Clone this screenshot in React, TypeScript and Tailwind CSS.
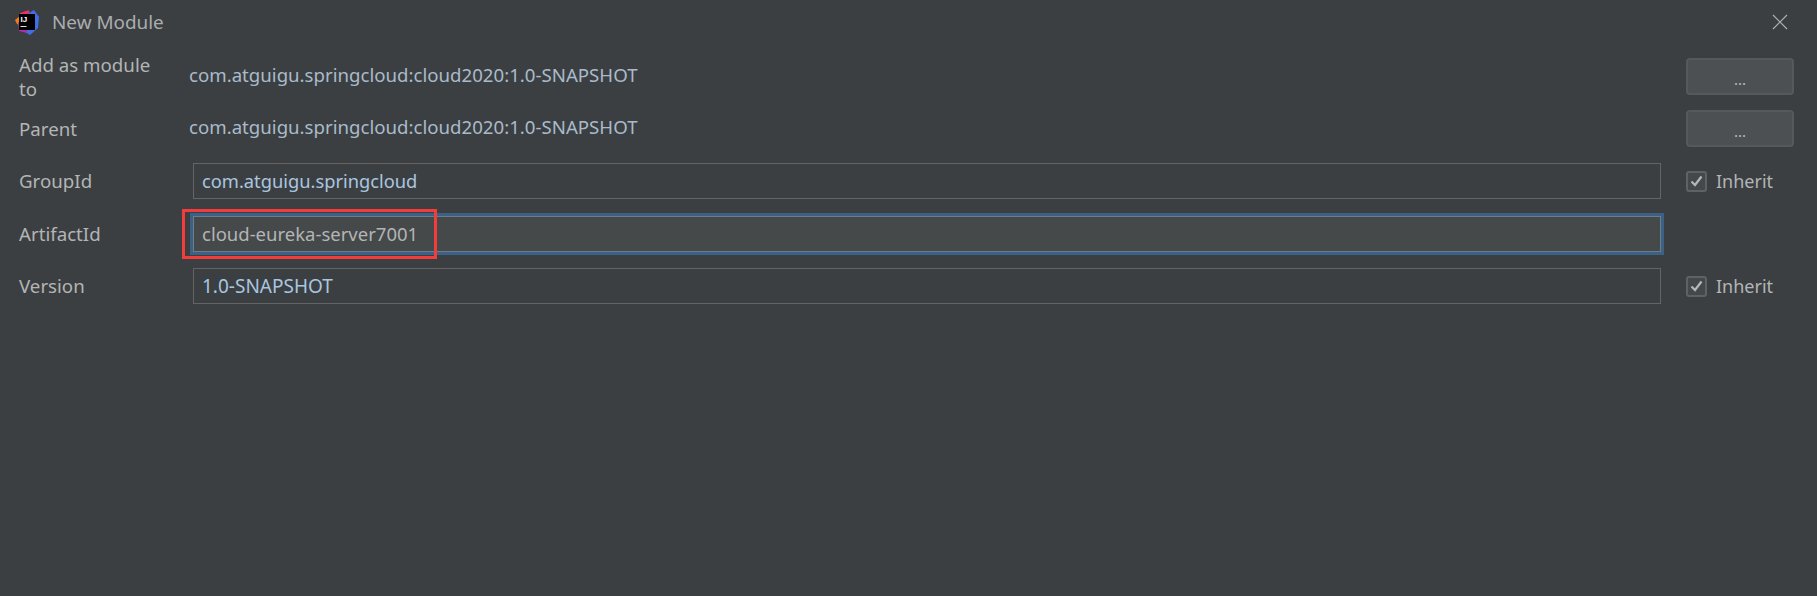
const font = { fontFamily: '"Noto Sans", sans-serif' };

function Logo() {
  return (
    <svg width="24" height="25" viewBox="0 0 24 25" className="shrink-0">
      <path d="M5 3 L14 0 L15 8 L4 13 Z" fill="#e8316f" />
      <path d="M0 10 L5 6 L5 15 L2 14 Z" fill="#f97a12" />
      <path d="M14 3 L19 0 L24 7 L23 18 L15 25 L10 22 Z" fill="#3f6fe8" />
      <path d="M3 12 L12 15 L12 23 L4 21 Z" fill="#b02ea8" />
      <rect x="4" y="4" width="16" height="16" fill="#000" />
      <text x="5.5" y="11.5" fontSize="8" fontWeight="700" fill="#fff" fontFamily="Liberation Sans, sans-serif">IJ</text>
      <rect x="5.5" y="16" width="6" height="1" fill="#ddd" />
    </svg>
  );
}

function Check() {
  return (
    <div className="w-[21px] h-[21px] rounded-[3px] border-2 border-[#5f6162] bg-[#43494a] flex items-center justify-center shrink-0">
      <svg width="13" height="12" viewBox="0 0 13 12" fill="none">
        <path d="M1.5 6.5 L5 10 L11.5 1.5" stroke="#b4b6b7" strokeWidth="2.2" />
      </svg>
    </div>
  );
}

function DotsButton() {
  return (
    <div className="w-[108px] h-[37px] rounded-[4px] border-2 border-[#56595b] bg-[#4c5052] flex items-center justify-center shrink-0">
      <span className="text-[15px] leading-none text-[#bbbbbb] mt-[6px]">...</span>
    </div>
  );
}

function Row({ label, className, children }: { label: string; className: string; children: React.ReactNode }) {
  return (
    <div className={`flex items-center ${className}`}>
      <div className="w-[170px] shrink-0 pl-[19px] text-[#b3b5b6] text-[18.7px]">{label}</div>
      {children}
    </div>
  );
}

function Field({ value, className }: { value: string; className: string }) {
  return (
    <div className="ml-[23px] w-[1468px] h-[36px] border border-[#646464] flex items-center pl-[8px] text-[#a9c6e0] shrink-0">
      <span className={className}>{value}</span>
    </div>
  );
}

function Inherit() {
  return (
    <div className="ml-[25px] flex items-center gap-[9px]">
      <Check />
      <span className="text-[#b3b5b6]">Inherit</span>
    </div>
  );
}

export default function App() {
  return (
    <div style={font} className="relative w-[1817px] h-[596px] overflow-hidden bg-[#3c3f41] text-[18px] leading-[24px]">
      <div className="h-[44px] flex items-center pl-[15px]">
        <Logo />
        <span className="ml-[13px] text-[#a9adb0] text-[18.9px]">New Module</span>
        <svg width="16" height="16" viewBox="0 0 16 16" className="ml-auto mr-[29px]" stroke="#aeb0b1" strokeWidth="1.2">
          <path d="M1 1 L15 15 M15 1 L1 15" />
        </svg>
      </div>
      <div className="flex flex-col">
        <Row label="Add as module to" className="mt-[14px] h-[37px]">
          <span className="ml-[19px] mb-[3px] text-[#a9bbcb] text-[18.65px] w-[1497px] shrink-0">com.atguigu.springcloud:cloud2020:1.0-SNAPSHOT</span>
          <DotsButton />
        </Row>
        <Row label="Parent" className="mt-[15px] h-[37px]">
          <span className="ml-[19px] mb-[3px] text-[#a9bbcb] text-[18.65px] w-[1497px] shrink-0">com.atguigu.springcloud:cloud2020:1.0-SNAPSHOT</span>
          <DotsButton />
        </Row>
        <Row label="GroupId" className="mt-[16px] h-[36px]">
          <Field value="com.atguigu.springcloud" className="text-[18.3px]" />
          <Inherit />
        </Row>
        <Row label="ArtifactId" className="mt-[17px] h-[36px]">
          <div className="ml-[23px] w-[1468px] h-[36px] border border-[#6b7e90] bg-[#45494a] outline-[3px] outline-[#3d6185] flex items-center pl-[8px] text-[#b3b5b6] text-[18.5px] shrink-0">
            cloud-eureka-server7001
          </div>
        </Row>
        <Row label="Version" className="mt-[16px] h-[36px]">
          <Field value="1.0-SNAPSHOT" className="text-[19px]" />
          <Inherit />
        </Row>
      </div>
      <div className="absolute left-[182px] top-[209px] w-[255px] h-[50px] border-[3px] border-[#f33d3d]" />
    </div>
  );
}
